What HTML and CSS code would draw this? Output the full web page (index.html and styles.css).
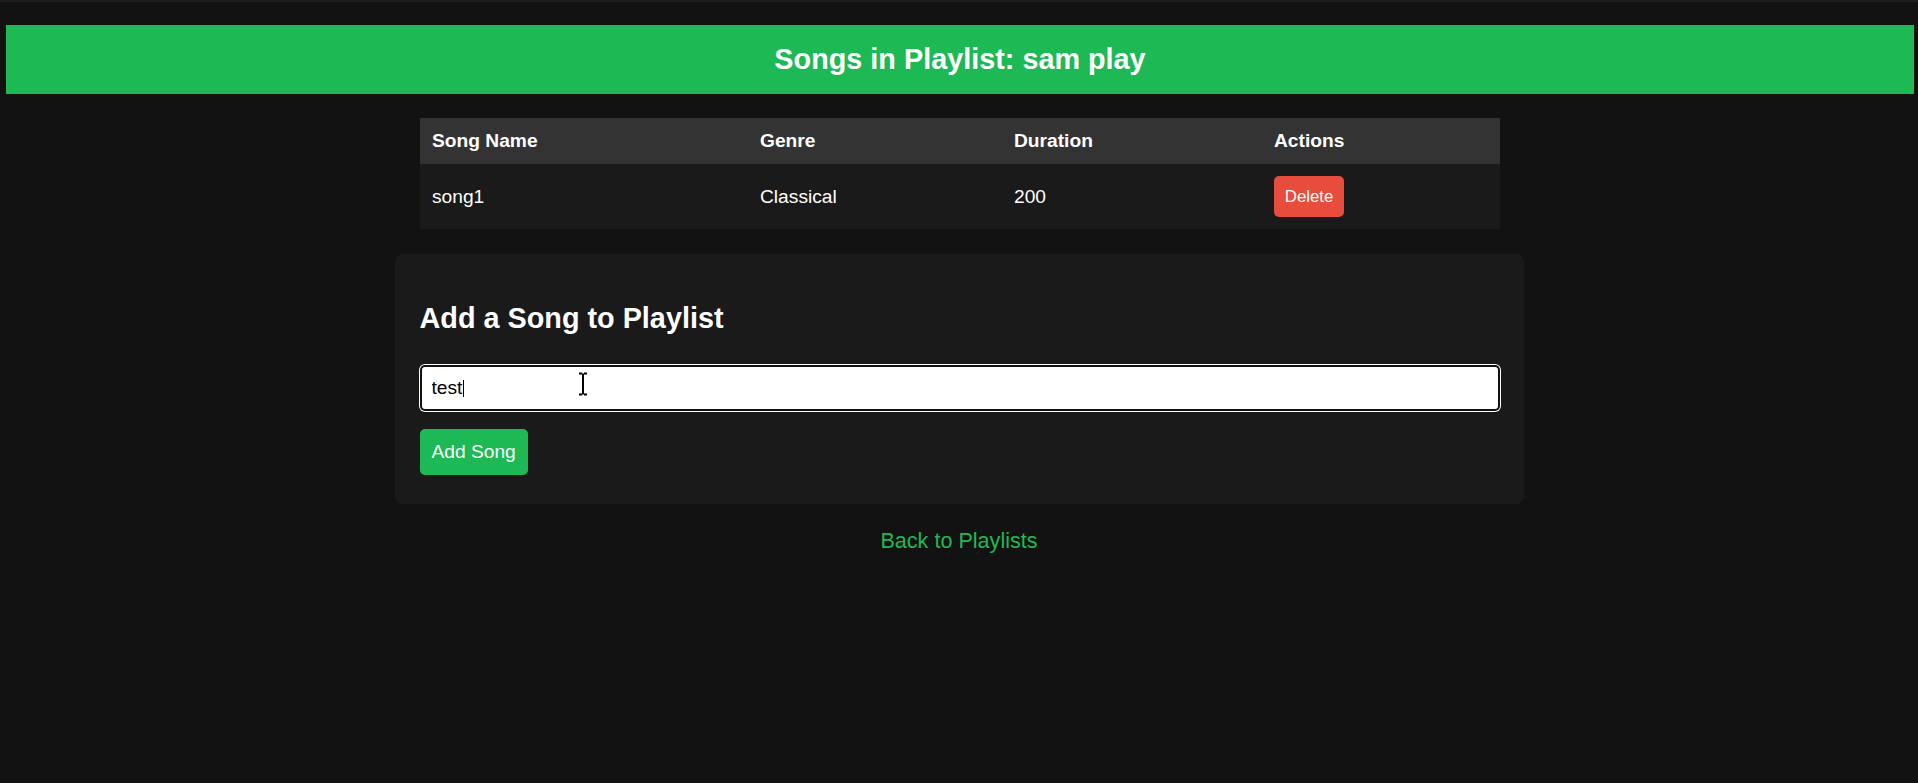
FILE: index.html
```html
<!DOCTYPE html>
<html lang="en">
<head>
<meta charset="utf-8">
<title>Songs in Playlist</title>
<link rel="stylesheet" href="styles.css">
</head>
<body>
<div class="topline"></div>
<header class="banner">
  <h1>Songs in Playlist: sam play</h1>
</header>
<table class="songs">
  <colgroup>
    <col class="c1"><col class="c2"><col class="c3"><col class="c4">
  </colgroup>
  <thead>
    <tr><th>Song Name</th><th>Genre</th><th>Duration</th><th>Actions</th></tr>
  </thead>
  <tbody>
    <tr>
      <td>song1</td>
      <td>Classical</td>
      <td>200</td>
      <td><button class="btn-delete" type="button">Delete</button></td>
    </tr>
  </tbody>
</table>
<section class="card">
  <h2>Add a Song to Playlist</h2>
  <form class="add-form">
    <div class="field">
      <input class="song-input" type="text" value="test">
      <span class="caret"></span>
      <svg class="ibeam" width="12" height="24" viewBox="0 0 12 24" aria-hidden="true">
        <path d="M2 1.5h3M7 1.5h3M6 1.5v21M2 22.5h3M7 22.5h3" stroke="#000" stroke-width="2" fill="none"/>
      </svg>
    </div>
    <button class="btn-add" type="button">Add Song</button>
  </form>
</section>
<a class="back" href="#">Back to Playlists</a>
</body>
</html>
```
FILE: styles.css
```css
html, body {
  margin: 0;
  padding: 0;
}
body {
  background: #121212;
  color: #ffffff;
  font-family: "Liberation Sans", Arial, sans-serif;
}
.topline {
  height: 2px;
  background: #1c1c22;
}
.banner {
  margin: 23px 4px 0 6px;
  background: #1db954;
}
.banner h1 {
  margin: 0;
  padding: 18px;
  font-size: 28.8px;
  line-height: 33px;
  text-align: center;
  font-weight: bold;
}
.songs {
  width: 1080px;
  margin: 24px 0 0 calc(50% - 539px);
  border-collapse: collapse;
  table-layout: fixed;
  font-size: 19.2px;
}
.songs .c1 { width: 328px; }
.songs .c2 { width: 254px; }
.songs .c3 { width: 260px; }
.songs .c4 { width: 238px; }
.songs th {
  background: #333333;
  text-align: left;
  padding: 12px;
  line-height: 22px;
  font-weight: bold;
}
.songs td {
  background: #1a1a1a;
  padding: 12px;
  line-height: 22px;
  vertical-align: middle;
}
.btn-delete {
  display: block;
  background: #e74c3c;
  color: #ffffff;
  border: none;
  border-radius: 5px;
  font-family: "Liberation Sans", Arial, sans-serif;
  font-size: 16.8px;
  line-height: 19.4px;
  padding: 10.8px;
}
.card {
  width: 1080px;
  margin: 25px auto 0;
  padding: 24px 24px 29px 25px;
  background: #1a1a1a;
  border-radius: 8px;
}
.card h2 {
  margin: 24px 0 30px;
  font-size: 28.8px;
  line-height: 33px;
}
.field {
  position: relative;
  margin-bottom: 18px;
}
.song-input {
  display: block;
  width: 100%;
  box-sizing: border-box;
  height: 46px;
  padding: 0 12px;
  font-family: "Liberation Sans", Arial, sans-serif;
  font-size: 19.2px;
  color: #000000;
  background: #ffffff;
  border: none;
  border-radius: 5px;
  box-shadow: inset 0 0 0 2px #111111, 0 0 0 1px #ffffff;
  outline: none;
}
.caret {
  position: absolute;
  left: 43px;
  top: 15px;
  width: 1px;
  height: 17px;
  background: #000000;
}
.ibeam {
  position: absolute;
  left: 157px;
  top: 7px;
}
.btn-add {
  display: block;
  background: #1db954;
  color: #ffffff;
  border: none;
  border-radius: 5px;
  font-family: "Liberation Sans", Arial, sans-serif;
  font-size: 19.2px;
  line-height: 22px;
  padding: 12px;
}
.back {
  display: block;
  width: max-content;
  margin: 24px auto 0;
  color: #1db954;
  font-size: 21.6px;
  line-height: 25px;
  text-decoration: none;
}
```
